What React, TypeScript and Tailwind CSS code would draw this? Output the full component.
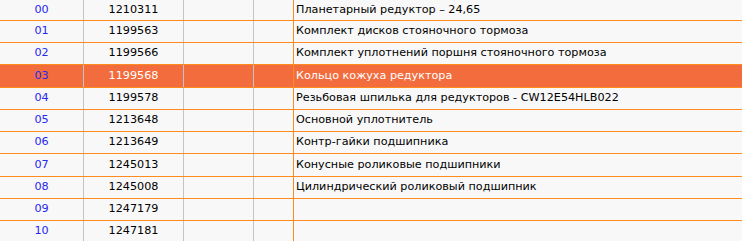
import React from "react";

const rows: [string, string, string, string][] = [
  ["00", "1210311", "Планетарный редуктор – 24,65", "h-[21px]"],
  ["01", "1199563", "Комплект дисков стояночного тормоза", "h-[22px]"],
  ["02", "1199566", "Комплект уплотнений поршня стояночного тормоза", "h-[22px]"],
  ["03", "1199568", "Кольцо кожуха редуктора", "h-[23px]"],
  ["04", "1199578", "Резьбовая шпилька для редукторов - CW12E54HLB022", "h-[22px]"],
  ["05", "1213648", "Основной уплотнитель", "h-[22px]"],
  ["06", "1213649", "Контр-гайки подшипника", "h-[22px]"],
  ["07", "1245013", "Конусные роликовые подшипники", "h-[23px]"],
  ["08", "1245008", "Цилиндрический роликовый подшипник", "h-[22px]"],
  ["09", "1247179", "", "h-[22px]"],
  ["10", "1247181", "", "h-[22px]"],
];

export default function App() {
  return (
    <div
      className="w-[742px] h-[241px] overflow-hidden bg-[#f8f8f8]"
      style={{ fontFamily: '"DejaVu Sans", Verdana, sans-serif' }}
    >
      <div className="flex flex-col text-[11.2px]">
        {rows.map(([n, code, desc, h]) => {
          const hi = n === "03";
          return (
            <div
              key={n}
              className={`flex ${h} border-b border-[#ff8a1e] ${hi ? "bg-[#f26c3d] text-white" : "text-black"}`}
            >
              <div className="w-[84px] shrink-0 flex items-center justify-center text-[#2727f0] border-r border-[#c4c4c4]">
                {n}
              </div>
              <div className="w-[100px] shrink-0 flex items-center justify-center border-r border-[#c4c4c4]">
                {code}
              </div>
              <div className="w-[70px] shrink-0 border-r border-[#c4c4c4]" />
              <div className="w-[40px] shrink-0 border-r border-[#ff8a1e]" />
              <div className="flex-1 flex items-center pl-[2px] whitespace-nowrap">{desc}</div>
            </div>
          );
        })}
      </div>
    </div>
  );
}
